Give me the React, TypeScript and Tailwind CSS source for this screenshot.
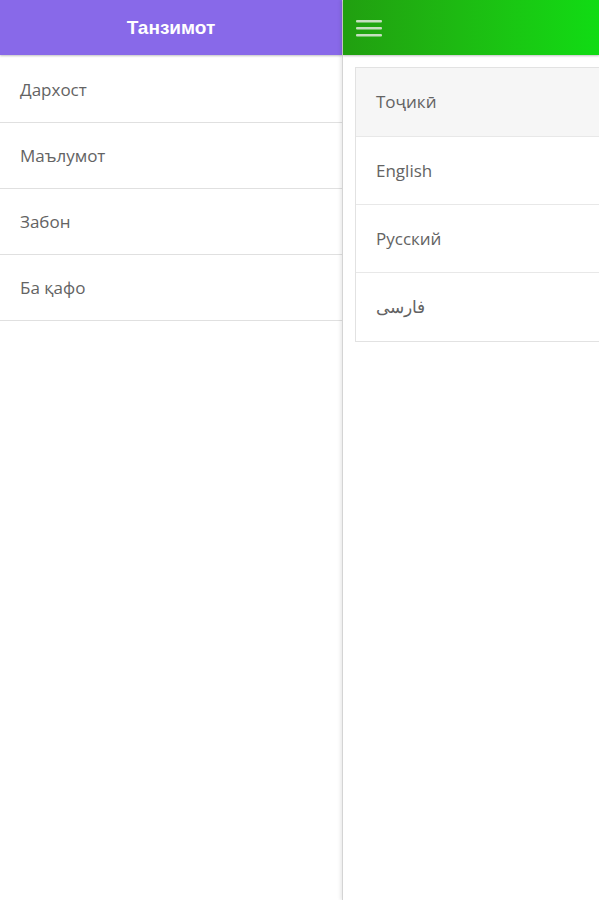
import React from "react";

const menuItems = ["Дархост", "Маълумот", "Забон", "Ба қафо"];
const languages = ["Тоҷикӣ", "English", "Русский", "فارسی"];

export default function App() {
  return (
    <div
      className="flex h-[900px] w-[599px] overflow-hidden bg-white"
      style={{ fontFamily: '"Open Sans", "Noto Sans", sans-serif' }}
    >
      {/* Side menu */}
      <aside className="flex w-[342px] shrink-0 flex-col">
        <header className="flex h-[55px] items-center justify-center bg-[#8869e9] shadow-[0_1px_2px_rgba(0,0,0,0.25)]">
          <h1 className="pt-[2px] text-[19px] font-bold text-white" style={{ fontFamily: '"Liberation Sans", Arial, sans-serif' }}>
            Танзимот
          </h1>
        </header>
        <ul className="mt-[1px]">
          {menuItems.map((item, i) => (
            <li
              key={item}
              className={`flex items-center border-b border-[#e0e0e0] pl-5 text-[17px] text-[#636363] ${
                i === 0 ? "h-[67px] pt-[2px]" : "h-[66px]"
              }`}
            >
              {item}
            </li>
          ))}
        </ul>
      </aside>

      {/* Main content */}
      <main className="flex flex-1 flex-col border-l border-[#d4d4d4] shadow-[-2px_0_3px_rgba(0,0,0,0.08)]">
        <header className="flex h-[55px] items-center bg-gradient-to-r from-[#219f10] to-[#10dc14] px-[13px] shadow-[0_1px_2px_rgba(0,0,0,0.25)]">
          <svg width="26" height="20" viewBox="0 0 26 20" className="text-[#c6dfc0]">
            <rect x="0" y="2" width="26" height="2.5" rx="1" fill="currentColor" />
            <rect x="0" y="9" width="26" height="2.5" rx="1" fill="currentColor" />
            <rect x="0" y="16" width="26" height="2.5" rx="1" fill="currentColor" />
          </svg>
        </header>
        <div className="pl-3 pt-3">
          <ul className="-mr-2 border border-[#e2e2e2]">
            {languages.map((lang, i) => (
              <li
                key={lang}
                className={`flex items-center pl-5 text-[17px] text-[#636363] ${
                  i < languages.length - 1 ? "border-b border-[#e8e8e8]" : ""
                } ${i === 0 ? "h-[69px] bg-[#f6f6f6]" : "h-[68px] bg-white"}`}
              >
                {lang}
              </li>
            ))}
          </ul>
        </div>
      </main>
    </div>
  );
}
